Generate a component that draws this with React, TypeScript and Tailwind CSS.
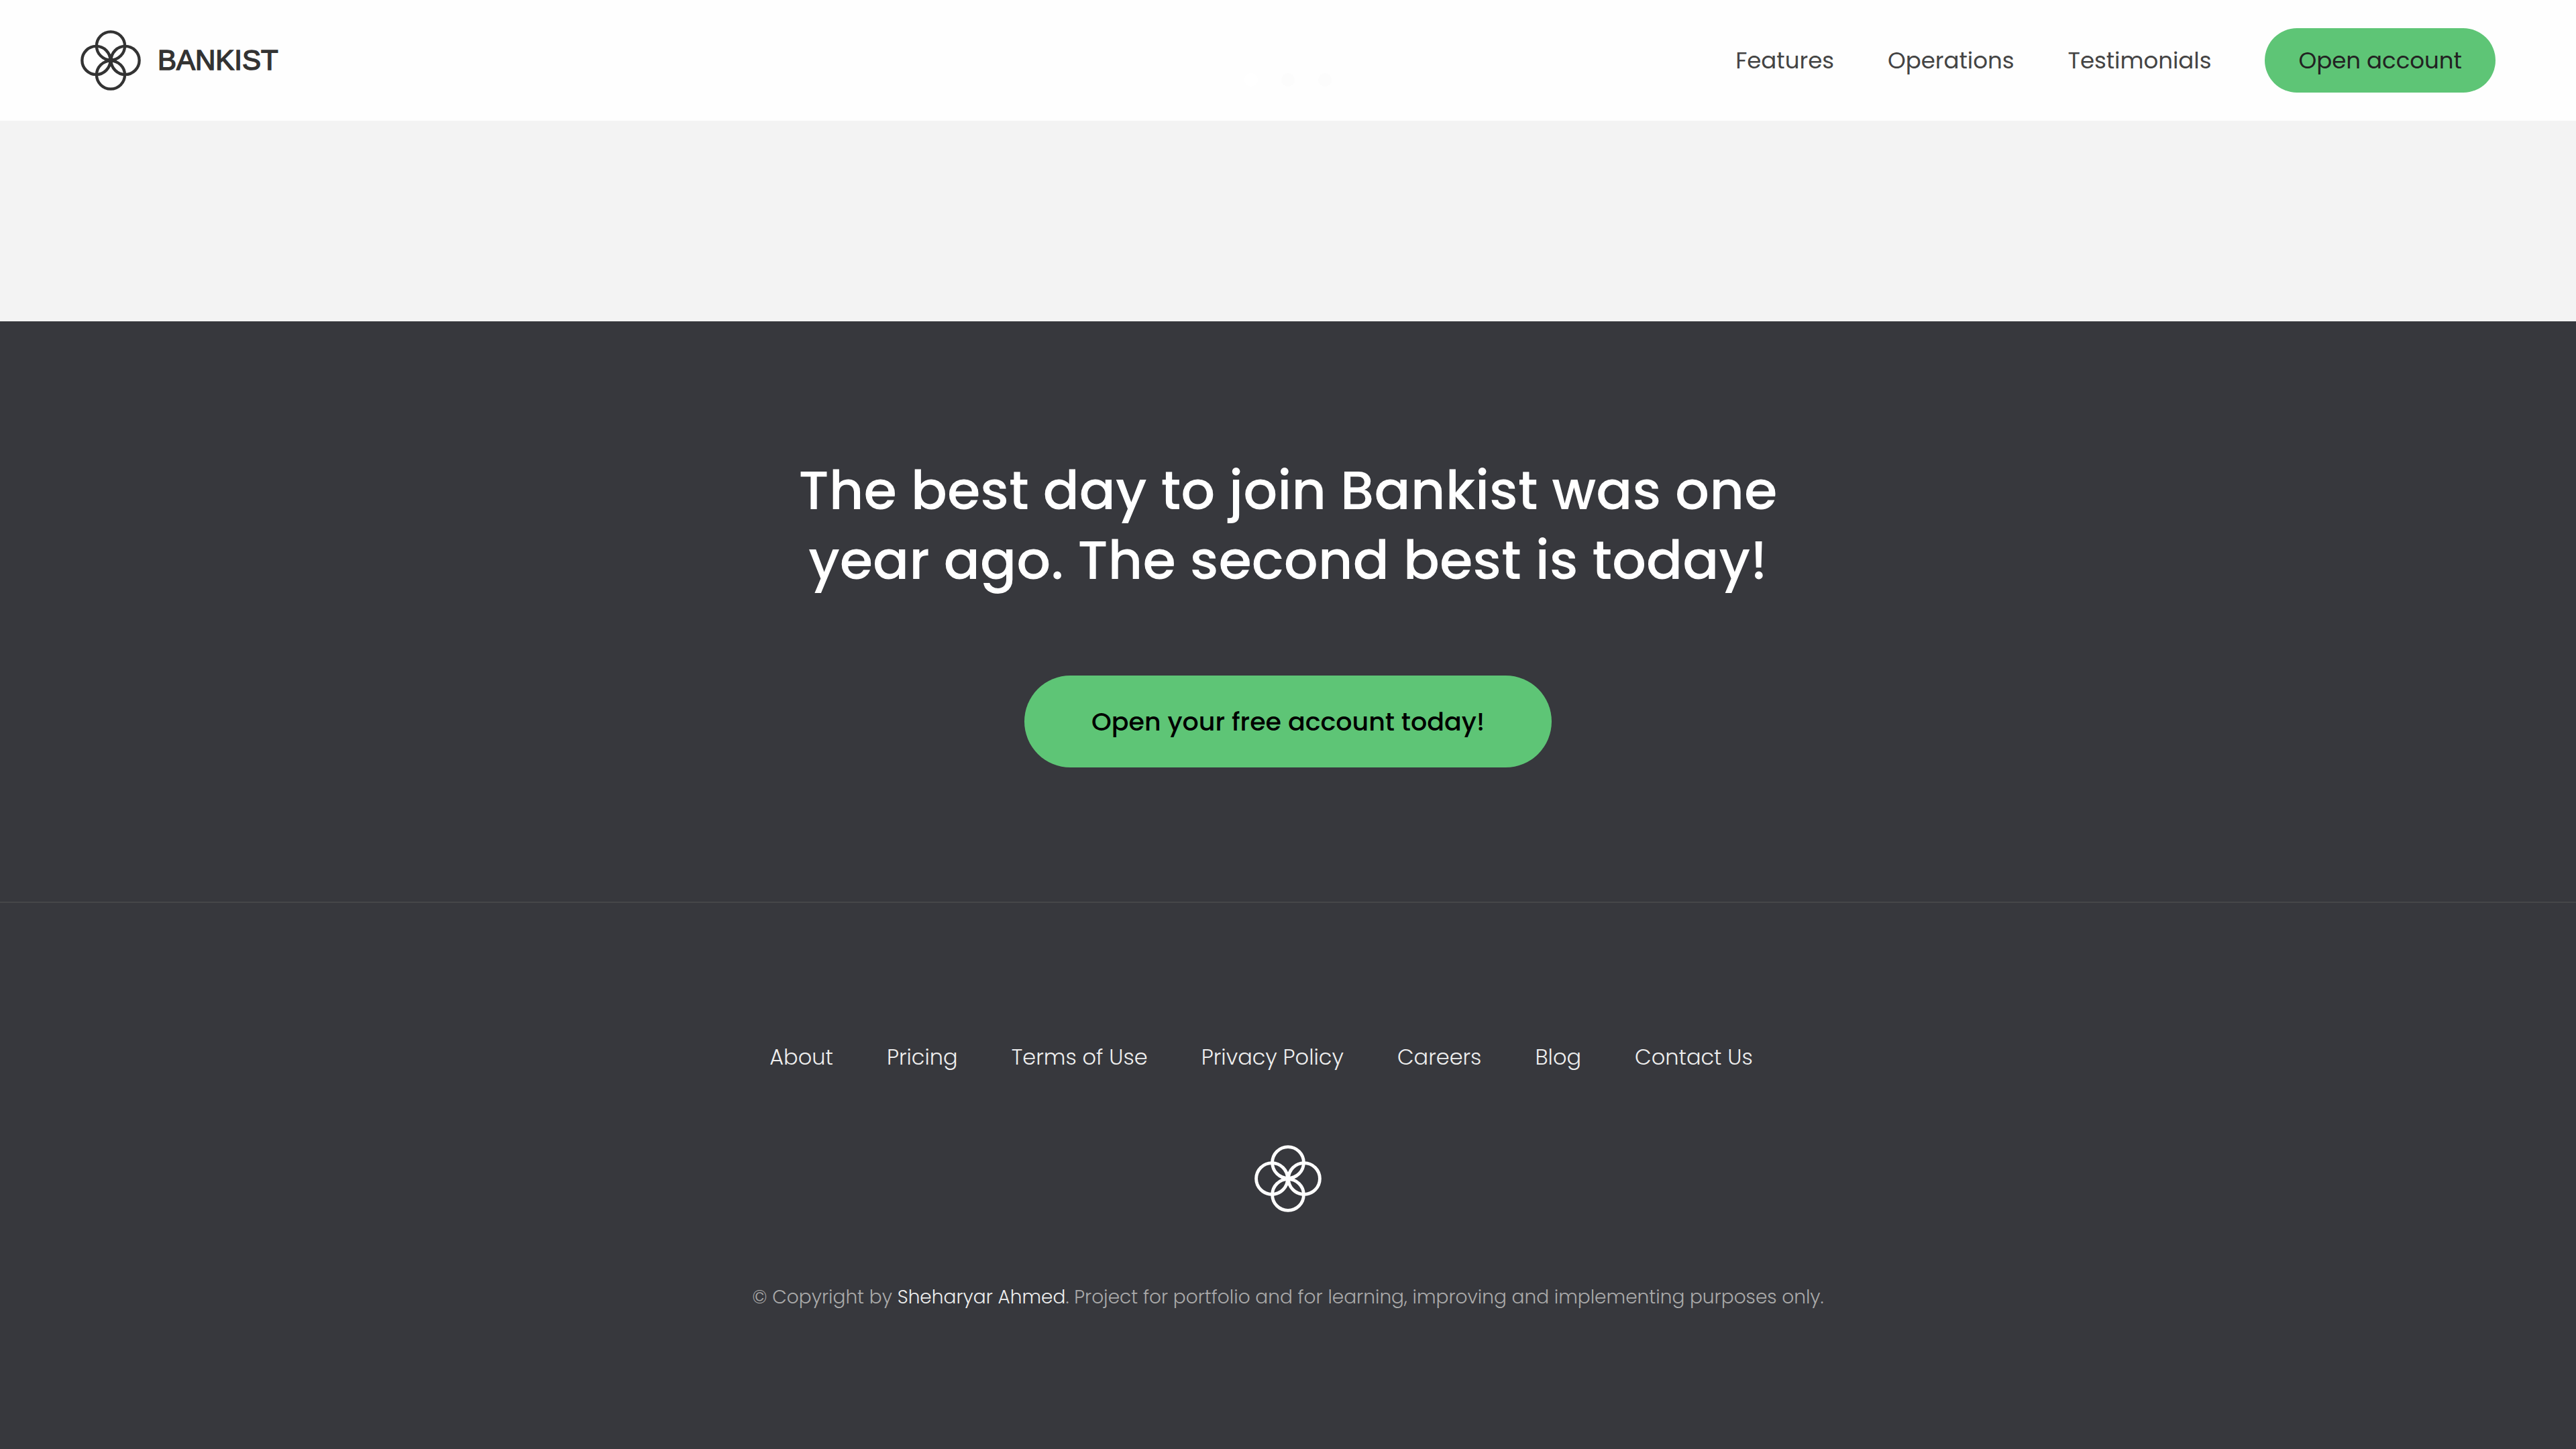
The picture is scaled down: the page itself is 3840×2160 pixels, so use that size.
const navLinks = ['Features', 'Operations', 'Testimonials'];
const footerLinks = ['About', 'Pricing', 'Terms of Use', 'Privacy Policy', 'Careers', 'Blog', 'Contact Us'];

function Flower({ className }: { className: string }) {
  return (
    <svg viewBox="0 0 100 100" fill="none" stroke="currentColor" strokeWidth="4.8" className={className} aria-hidden="true">
      <circle cx="50" cy="26" r="23.4" />
      <circle cx="74" cy="50" r="23.4" />
      <circle cx="50" cy="74" r="23.4" />
      <circle cx="26" cy="50" r="23.4" />
    </svg>
  );
}

function Header() {
  return (
    <header className="relative flex h-[180px] items-center justify-between bg-[#fefefe] px-[120px]">
      <a href="#" className="flex items-center gap-[25px] text-[#333333]">
        <Flower className="size-[90px]" />
        <span className="font-['Liberation_Sans',sans-serif] text-[42px] leading-none [-webkit-text-stroke:1.5px_currentColor]">
          BANKIST
        </span>
      </a>
      <div className="absolute top-[109px] left-1/2 flex -translate-x-[65px] gap-[35px]" aria-hidden="true">
        <span className="size-5 rounded-full bg-white" />
        <span className="size-5 rounded-full bg-[#fcfcfc]" />
        <span className="size-5 rounded-full bg-[#fcfcfc]" />
      </div>
      <nav className="flex items-center gap-20 text-[34px] text-[#444444]">
        {navLinks.map((label) => (
          <a key={label} href="#">
            {label}
          </a>
        ))}
        <a href="#" className="rounded-full bg-[#5ec576] px-[50px] py-5 leading-14 text-[#222222]">
          Open account
        </a>
      </nav>
    </header>
  );
}

export default function App() {
  return (
    <div className="flex min-h-screen flex-col bg-[#f3f3f3] font-['Poppins',Inter,sans-serif]">
      <Header />
      <section className="mt-[299px] flex flex-col items-center bg-[#37383d] py-[200px]">
        <h2 className="mb-[120px] text-center text-[80px] leading-[104px] font-medium text-white">
          The best day to join Bankist was one
          <br />
          year ago. The second best is today!
        </h2>
        <button type="button" className="rounded-full bg-[#5ec576] px-[100px] py-10 text-[38px] leading-[57px] font-medium text-black">
          Open your free account today!
        </button>
      </section>
      <footer className="flex grow flex-col items-center border-t-2 border-[#464648] bg-[#37383d] py-[200px] font-light">
        <nav className="mr-20 flex gap-20 pb-0.5 text-[32px] leading-[59px] text-[#eeeeee]">
          {footerLinks.map((label) => (
            <a key={label} href="#">
              {label}
            </a>
          ))}
        </nav>
        <Flower className="my-[100px] size-[100px] text-white" />
        <p className="text-[28px] leading-[53px] text-[#aaaaaa]">
          © Copyright by{' '}
          <a href="#" className="text-[#eeeeee]">
            Sheharyar Ahmed
          </a>
          . Project for portfolio and for learning, improving and implementing purposes only.
        </p>
      </footer>
    </div>
  );
}
